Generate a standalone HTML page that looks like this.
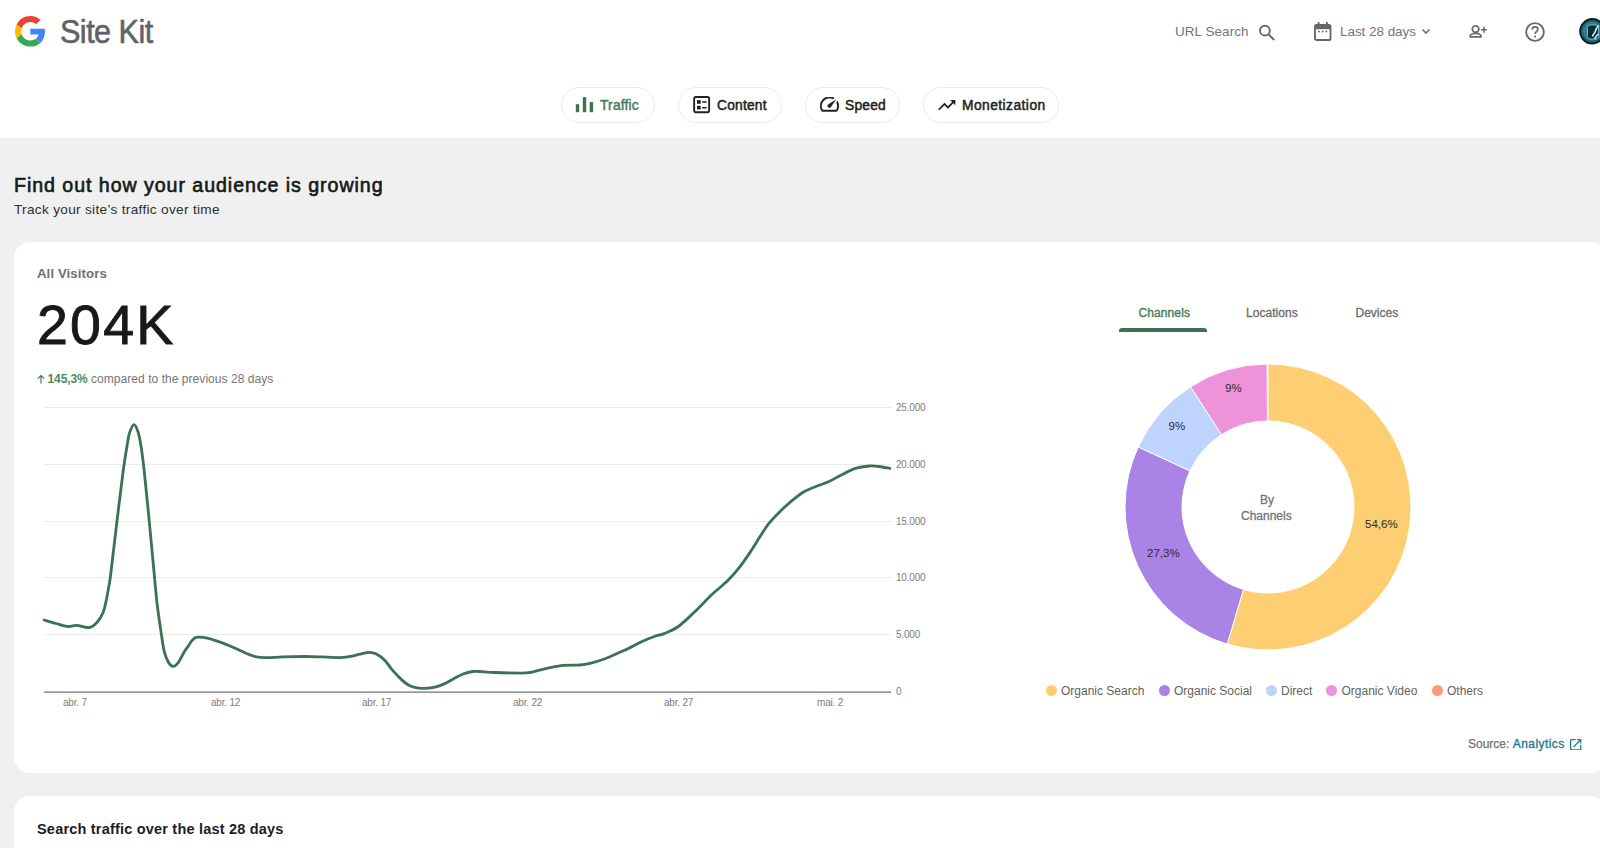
<!DOCTYPE html>
<html><head><meta charset="utf-8">
<style>
*{box-sizing:border-box;margin:0;padding:0}
html,body{width:1600px;height:848px;overflow:hidden;background:#f0f0f0;font-family:"Liberation Sans",sans-serif;}
.abs{position:absolute;white-space:nowrap;line-height:1}
#header{position:absolute;left:0;top:0;width:1600px;height:138px;background:#fff;border-bottom:1px solid #ececec;height:139px}
.pill{position:absolute;top:87px;height:36px;border:1px solid #ebebeb;border-radius:18px;background:#fff}
.pill span{position:absolute;top:10.5px;font-size:13.8px;line-height:1;color:#1f2420;-webkit-text-stroke:0.5px currentColor;letter-spacing:0.2px}
.pill svg{position:absolute}
.card{position:absolute;left:14px;background:#fff;border-radius:16px}
.yl{position:absolute;left:896px;font-size:10px;color:#7d7d7d;line-height:1;letter-spacing:-0.2px}
.xl{position:absolute;top:697.5px;font-size:10px;color:#7d7d7d;line-height:1;letter-spacing:-0.2px}
.lg{position:absolute;top:685px;font-size:12px;color:#5f6360;line-height:1}
.dot{position:absolute;top:684.5px;width:11px;height:11px;border-radius:50%}
.pl{position:absolute;font-size:11.5px;color:#2b2b2b;line-height:1}
</style></head><body>
<div id="header">
  <svg class="abs" style="left:14.5px;top:16px" width="30.6" height="30.6" viewBox="0 0 48 48">
    <path fill="#EA4335" d="M24 9.5c3.54 0 6.71 1.22 9.21 3.6l6.85-6.85C35.9 2.38 30.47 0 24 0 14.62 0 6.51 5.38 2.560 13.22l7.980 6.190C12.43 13.72 17.74 9.5 24 9.5z"/>
    <path fill="#4285F4" d="M46.98 24.55c0-1.57-.15-3.090-.38-4.550H24v9.020h12.94c-.58 2.960-2.260 5.480-4.780 7.180l7.730 6c4.510-4.180 7.090-10.360 7.090-17.650z"/>
    <path fill="#FBBC05" d="M10.53 28.59c-.48-1.450-.76-2.990-.76-4.590s.27-3.140.76-4.590l-7.980-6.190C.92 16.46 0 20.12 0 24c0 3.880.92 7.540 2.560 10.780l7.970-6.190z"/>
    <path fill="#34A853" d="M24 48c6.48 0 11.930-2.130 15.890-5.810l-7.730-6c-2.150 1.450-4.920 2.300-8.160 2.300-6.260 0-11.570-4.220-13.470-9.910l-7.980 6.190C6.51 42.62 14.62 48 24 48z"/>
  </svg>
  <div class="abs" style="left:60px;top:13.5px;font-size:34px;color:#5f6368;letter-spacing:-0.6px;-webkit-text-stroke:0.6px #5f6368;transform:scaleX(0.9);transform-origin:0 0">Site Kit</div>

  <div class="abs" style="left:1175px;top:24.5px;font-size:13.5px;color:#757575;letter-spacing:0.05px">URL Search</div>
  <svg class="abs" style="left:1256px;top:24px" width="22" height="20" viewBox="0 0 22 20">
    <circle cx="8.9" cy="6.65" r="4.9" fill="none" stroke="#666" stroke-width="1.9"/>
    <path d="M12.3 10.1 L18.2 16" stroke="#666" stroke-width="2"/>
  </svg>
  <svg class="abs" style="left:1314px;top:22px" width="17.5" height="19" viewBox="0 0 18 19" preserveAspectRatio="none">
    <rect x="1" y="3" width="16" height="15" rx="1.6" fill="none" stroke="#666" stroke-width="1.9"/>
    <rect x="1" y="3" width="16" height="4.2" fill="#666"/>
    <rect x="3.8" y="0" width="1.9" height="4" fill="#666"/>
    <rect x="12.3" y="0" width="1.9" height="4" fill="#666"/>
    <circle cx="5.1" cy="9.5" r="0.95" fill="#666"/><circle cx="8.9" cy="9.5" r="0.95" fill="#666"/><circle cx="12.7" cy="9.5" r="0.95" fill="#666"/>
  </svg>
  <div class="abs" style="left:1340px;top:24.5px;font-size:13.5px;color:#757575;letter-spacing:-0.05px">Last 28 days</div>
  <svg class="abs" style="left:1420px;top:27px" width="12" height="9" viewBox="0 0 12 9">
    <path d="M2.5 2.5 L6 6 L9.5 2.5" fill="none" stroke="#6f6f6f" stroke-width="1.6"/>
  </svg>
  <svg class="abs" style="left:1467px;top:23px" width="22" height="17" viewBox="0 0 22 17">
    <circle cx="8.6" cy="6.1" r="3.3" fill="none" stroke="#6a6a6a" stroke-width="1.7"/>
    <path d="M3.1 13.85 V13.2 C3.1 11.2 6.4 10.3 8.6 10.3 C10.8 10.3 14.1 11.2 14.1 13.2 V13.85 Z" fill="none" stroke="#6a6a6a" stroke-width="1.7" stroke-linejoin="round"/>
    <path d="M16.9 3.8 V9.8 M13.9 6.8 H19.9" stroke="#6a6a6a" stroke-width="1.6"/>
  </svg>
  <svg class="abs" style="left:1524.2px;top:20.5px" width="22" height="22" viewBox="0 0 22 22">
    <circle cx="11" cy="11" r="8.85" fill="none" stroke="#6a6a6a" stroke-width="1.9"/>
    <path d="M8.1 8.6 C8.1 6.9 9.4 5.9 11 5.9 C12.6 5.9 13.9 6.9 13.9 8.5 C13.9 10.5 11.1 10.6 11.1 13" fill="none" stroke="#6a6a6a" stroke-width="1.7"/>
    <circle cx="11.1" cy="15.6" r="1.05" fill="#6a6a6a"/>
  </svg>
  <svg class="abs" style="left:1579px;top:18px" width="21" height="27" viewBox="0 0 21 27">
    <circle cx="13.4" cy="13.3" r="13.2" fill="#0a1c22"/>
    <circle cx="13.4" cy="13.3" r="11.4" fill="#1f5e6e"/>
    <circle cx="13.4" cy="13.3" r="9.5" fill="#2f7f90"/>
    <rect x="8.5" y="7" width="11" height="14" rx="2.5" fill="#0f2a31" stroke="#6fb5c2" stroke-width="1"/>
    <path d="M13.5 18.5 C14.5 15 15.5 15.5 16 14 C17 11 18 9 19.5 7.5 M15.5 21 C17 18.5 18 17 19 16" stroke="#c8f4f8" stroke-width="1.6" fill="none"/>
  </svg>
</div>

<div class="pill" style="left:561px;width:94px">
  <svg style="left:13.2px;top:9px" width="19" height="16" viewBox="0 0 19 16"><rect x="0.8" y="7.2" width="3.4" height="8" fill="#3c7251"/><rect x="7.8" y="0.2" width="3.4" height="15" fill="#3c7251"/><rect x="14.7" y="5" width="3.4" height="10.2" fill="#3c7251"/></svg>
  <span style="left:38px;color:#4b7d5c">Traffic</span></div>
<div class="pill" style="left:678px;width:104px">
  <svg style="left:14px;top:8px" width="19" height="19" viewBox="0 0 19 19"><rect x="1.15" y="1" width="15" height="15.2" rx="1.6" fill="none" stroke="#1f2420" stroke-width="1.9"/><rect x="4" y="4.1" width="3.7" height="3.7" fill="#1f2420"/><rect x="9" y="5.2" width="4.7" height="1.5" rx="0.5" fill="#1f2420"/><rect x="4" y="9.8" width="3.7" height="3.6" fill="#1f2420"/><rect x="9" y="11" width="4.7" height="1.5" rx="0.5" fill="#1f2420"/></svg>
  <span style="left:38px">Content</span></div>
<div class="pill" style="left:805px;width:95px">
  <svg style="left:14px;top:9.2px" width="19" height="14.7" viewBox="2.1 4.6 19.9 15.4"><path fill="#1f2420" d="M20.38 8.57l-1.23 1.85a8 8 0 0 1-.22 7.58H5.07A8 8 0 0 1 15.58 6.85l1.85-1.23A10 10 0 0 0 3.35 19a2 2 0 0 0 1.72 1h13.85a2 2 0 0 0 1.74-1 10 10 0 0 0-.27-10.440zm-9.790 6.840a2 2 0 0 0 2.830 0l5.660-8.490-8.490 5.660a2 2 0 0 0 0 2.830z"/></svg>
  <span style="left:39px">Speed</span></div>
<div class="pill" style="left:923px;width:136px">
  <svg style="left:14.2px;top:11.9px" width="17.4" height="10.4" viewBox="2 6 20 12"><path fill="#1f2420" d="M16 6l2.290 2.290-4.880 4.880-4-4L2 16.590 3.410 18l6-6 4 4 6.300-6.290L22 12V6z"/></svg>
  <span style="left:38px;letter-spacing:0.45px">Monetization</span></div>

<div class="abs" style="left:14px;top:176px;font-size:19.6px;color:#161b18;-webkit-text-stroke:0.65px #161b18;letter-spacing:0.95px">Find out how your audience is growing</div>
<div class="abs" style="left:14px;top:203px;font-size:13.6px;color:#2b2f2c;letter-spacing:0.32px">Track your site’s traffic over time</div>

<div class="card" style="top:242px;width:1592px;height:531px"></div>
<div class="card" style="top:796px;width:1592px;height:100px"></div>

<div class="abs" style="left:37px;top:267px;font-size:13.2px;font-weight:bold;color:#6c726e;letter-spacing:0.1px">All Visitors</div>
<div class="abs" style="left:37px;top:298px;font-size:55.5px;color:#161b18;letter-spacing:2.2px;-webkit-text-stroke:0.9px #161b18">204K</div>
<svg class="abs" style="left:36px;top:374px" width="10" height="10" viewBox="0 0 10 10"><path d="M5 9.5 V1.5 M1.8 4.7 L5 1.5 L8.2 4.7" fill="none" stroke="#3c7251" stroke-width="1.1"/></svg>
<div class="abs" style="left:47.5px;top:373px;font-size:12px;font-weight:bold;color:#4b8a5c;letter-spacing:-0.1px">145,3%</div>
<div class="abs" style="left:91px;top:373px;font-size:12px;color:#757575;letter-spacing:0.05px">compared to the previous 28 days</div>

<svg class="abs" style="left:0;top:0" width="1600" height="848">
  <g stroke="#ebebeb" stroke-width="1">
    <path d="M44 407.5H892M44 464.5H892M44 521.5H892M44 577.5H892M44 634.5H892"/>
  </g>
  <path d="M44 692.2H891" stroke="#737373" stroke-width="1.2"/>
  <path d="M44.2 620.0C46.2 620.6 52.0 622.4 56.0 623.5C60.0 624.6 64.8 626.2 68.3 626.5C71.8 626.8 73.3 625.2 76.8 625.4C80.2 625.6 85.6 628.0 89.0 627.5C92.4 627.0 94.8 624.7 97.1 622.2C99.4 619.7 101.5 616.1 103.0 612.7C104.5 609.4 105.0 606.0 105.9 602.1C106.8 598.2 107.5 593.7 108.3 589.2C109.1 584.7 109.2 586.2 110.6 575.0C112.0 563.8 114.8 539.4 116.9 521.9C119.0 504.4 121.6 482.5 123.3 470.0C125.0 457.5 125.9 452.9 126.9 446.8C127.9 440.7 128.2 437.1 129.4 433.4C130.6 429.7 132.5 424.7 134.0 424.6C135.5 424.5 137.1 429.0 138.3 432.7C139.5 436.4 140.1 440.6 141.1 446.8C142.1 453.0 142.7 457.5 144.1 470.0C145.5 482.5 147.6 504.4 149.3 521.9C151.0 539.4 153.0 561.2 154.3 575.0C155.6 588.8 156.1 595.3 157.2 604.5C158.3 613.7 159.6 622.5 160.8 630.4C162.0 638.3 163.0 646.4 164.3 651.7C165.6 657.0 166.9 659.8 168.4 662.3C169.9 664.8 171.4 666.4 173.1 666.4C174.8 666.4 176.5 664.8 178.4 662.3C180.3 659.8 182.6 654.5 184.3 651.7C186.0 648.9 187.4 647.2 188.8 645.3C190.1 643.3 191.2 641.3 192.5 640.0C193.8 638.7 194.4 637.8 196.2 637.4C198.1 637.0 200.6 636.9 203.8 637.4C206.9 637.9 210.6 639.0 215.0 640.4C219.4 641.8 225.0 643.9 230.0 646.0C235.0 648.1 240.6 650.9 245.0 652.8C249.4 654.6 252.6 656.1 256.3 656.9C260.1 657.7 263.1 657.6 267.5 657.6C271.9 657.6 276.2 657.1 282.5 656.9C288.8 656.7 298.6 656.5 305.0 656.5C311.4 656.5 315.6 656.7 321.2 656.9C326.8 657.1 334.2 657.7 338.9 657.6C343.6 657.5 345.9 657.1 349.5 656.5C353.1 655.9 356.9 654.8 360.2 654.1C363.5 653.4 366.7 652.3 369.4 652.3C372.1 652.3 373.8 652.8 376.4 654.1C379.0 655.5 382.3 657.8 384.9 660.4C387.5 663.0 389.2 666.4 392.0 669.6C394.8 672.8 398.8 677.1 401.5 679.6C404.2 682.1 405.8 683.4 408.0 684.7C410.2 686.0 412.0 686.7 414.5 687.3C417.0 687.9 419.7 688.3 422.9 688.3C426.1 688.3 430.4 688.0 433.9 687.3C437.3 686.6 440.4 685.5 443.6 684.1C446.9 682.7 450.1 680.6 453.4 678.9C456.6 677.2 459.9 675.2 463.1 674.0C466.3 672.8 470.1 671.9 472.8 671.5C475.5 671.1 475.6 671.3 479.3 671.5C483.0 671.7 488.0 672.2 495.0 672.5C502.0 672.8 515.4 673.1 521.2 673.1C527.1 673.1 526.5 673.1 530.0 672.5C533.5 671.9 537.3 670.5 542.5 669.4C547.7 668.2 555.0 666.3 561.2 665.6C567.5 664.9 575.2 665.4 580.0 665.0C584.8 664.6 585.8 664.4 590.0 663.4C594.2 662.4 599.4 660.9 605.0 658.8C610.6 656.6 617.5 653.5 623.8 650.6C630.0 647.7 637.3 643.6 642.5 641.2C647.7 638.9 651.4 637.5 655.0 636.2C658.6 635.0 660.3 635.2 664.2 633.6C668.1 632.0 673.3 630.0 678.3 626.5C683.3 623.0 688.6 617.6 694.2 612.3C699.8 607.0 706.3 599.9 711.9 594.6C717.5 589.3 723.1 585.2 727.8 580.5C732.5 575.8 736.4 571.2 740.2 566.3C744.0 561.4 747.5 556.2 750.8 551.3C754.0 546.4 756.8 541.7 759.7 537.1C762.7 532.5 765.3 528.0 768.5 523.9C771.7 519.8 775.6 515.9 779.1 512.4C782.6 508.9 785.3 506.2 789.4 502.8C793.5 499.4 798.9 494.8 803.6 492.0C808.3 489.2 813.5 487.5 817.7 485.8C821.9 484.1 825.1 483.4 829.0 481.6C832.9 479.8 836.9 477.2 841.3 475.0C845.7 472.8 850.8 469.9 855.5 468.4C860.2 466.9 865.7 466.3 869.6 466.0C873.5 465.7 875.6 466.1 879.0 466.5C882.4 466.9 888.1 468.1 889.9 468.4" fill="none" stroke="#3c7251" stroke-width="2.8" stroke-linejoin="round" stroke-linecap="round"/>
</svg>
<div class="yl" style="top:403px">25.000</div>
<div class="yl" style="top:460px">20.000</div>
<div class="yl" style="top:517px">15.000</div>
<div class="yl" style="top:573px">10.000</div>
<div class="yl" style="top:630px">5.000</div>
<div class="yl" style="top:687px">0</div>
<div class="xl" style="left:63px">abr. 7</div>
<div class="xl" style="left:211px">abr. 12</div>
<div class="xl" style="left:362px">abr. 17</div>
<div class="xl" style="left:513px">abr. 22</div>
<div class="xl" style="left:664px">abr. 27</div>
<div class="xl" style="left:817px">mai. 2</div>

<div class="abs" style="left:1138.5px;top:306.5px;font-size:12px;color:#4b7d5c;-webkit-text-stroke:0.4px #4b7d5c;letter-spacing:0.1px">Channels</div>
<div class="abs" style="left:1246px;top:306.5px;font-size:12px;color:#6c6c6c;-webkit-text-stroke:0.3px #6c6c6c;letter-spacing:0.05px">Locations</div>
<div class="abs" style="left:1355.5px;top:306.5px;font-size:12px;color:#6c6c6c;-webkit-text-stroke:0.3px #6c6c6c">Devices</div>
<div class="abs" style="left:1119px;top:328px;width:88px;height:4px;background:#3c7251;border-radius:3px 3px 0 0"></div>

<svg class="abs" style="left:1125.4px;top:363.7px" width="286" height="286" viewBox="0 0 286 286">
<path fill="#fece72" stroke="#fff" stroke-width="1" d="M143.00 0.00A143 143 0 1 1 102.24 280.07L118.49 225.43A86 86 0 1 0 143.00 57.00Z"/>
<path fill="#a983e6" stroke="#fff" stroke-width="1" d="M102.24 280.07A143 143 0 0 1 13.23 82.93L64.96 106.87A86 86 0 0 0 118.49 225.43Z"/>
<path fill="#bed4ff" stroke="#fff" stroke-width="1" d="M13.23 82.93A143 143 0 0 1 65.62 22.74L96.46 70.68A86 86 0 0 0 64.96 106.87Z"/>
<path fill="#ee92da" stroke="#fff" stroke-width="1" d="M65.62 22.74A143 143 0 0 1 142.10 0.00L142.46 57.00A86 86 0 0 0 96.46 70.68Z"/>
</svg>
<div class="pl" style="left:1225px;top:382.8px">9%</div>
<div class="pl" style="left:1168.5px;top:420.8px">9%</div>
<div class="pl" style="left:1147px;top:548px">27,3%</div>
<div class="pl" style="left:1365px;top:518.5px">54,6%</div>
<div class="abs" style="left:1260px;top:493.5px;font-size:12px;color:#757575;-webkit-text-stroke:0.3px #757575">By</div>
<div class="abs" style="left:1241px;top:509.5px;font-size:12px;color:#757575;-webkit-text-stroke:0.3px #757575">Channels</div>

<div class="dot" style="left:1046px;background:#fece72"></div><div class="lg" style="left:1061px">Organic Search</div>
<div class="dot" style="left:1158.5px;background:#a983e6"></div><div class="lg" style="left:1174px">Organic Social</div>
<div class="dot" style="left:1266px;background:#bed4ff"></div><div class="lg" style="left:1281px">Direct</div>
<div class="dot" style="left:1326px;background:#ee92da"></div><div class="lg" style="left:1341.5px">Organic Video</div>
<div class="dot" style="left:1432px;background:#ff9b7a"></div><div class="lg" style="left:1447px">Others</div>

<div class="abs" style="left:1468px;top:738px;font-size:12px;color:#727272;-webkit-text-stroke:0.25px #727272">Source: <span style="color:#1b8087;-webkit-text-stroke:0.35px #1b8087;letter-spacing:0.45px">Analytics</span></div>
<svg class="abs" style="left:1570.2px;top:738.5px" width="11.4" height="11.4" viewBox="3 3 18 18"><path fill="#1b8087" d="M19 19H5V5h7V3H5a2 2 0 0 0-2 2v14a2 2 0 0 0 2 2h14c1.1 0 2-.9 2-2v-7h-2v7zM14 3v2h3.590l-9.830 9.830 1.410 1.410L19 6.410V10h2V3h-7z"/></svg>

<div class="abs" style="left:37px;top:822px;font-size:14.5px;font-weight:bold;color:#1b201d;letter-spacing:0.2px">Search traffic over the last 28 days</div>
</body></html>
